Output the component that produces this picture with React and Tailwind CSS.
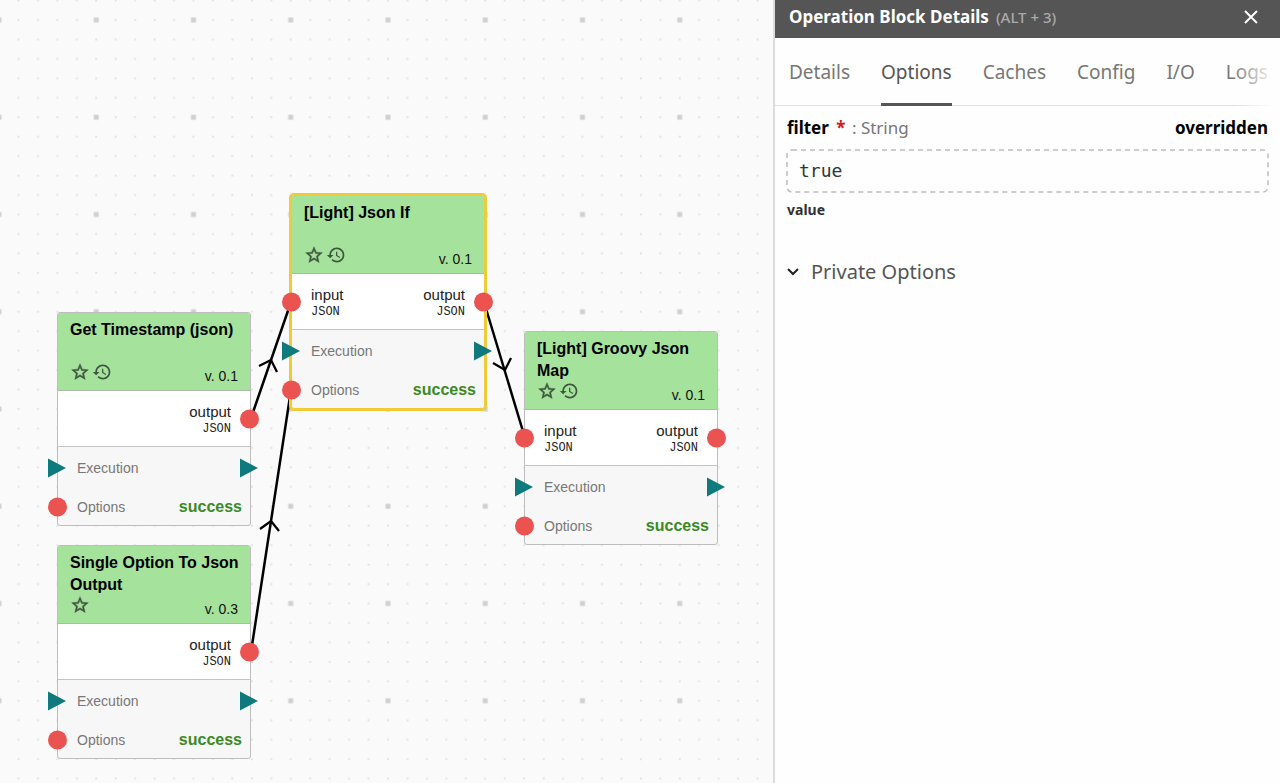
import React from "react";

const NODES = [
  { id: "timestamp", title: "Get Timestamp (json)", version: "0.1", history: true, output: true, place: "left-[57px] top-[312px]" },
  { id: "single-option", title: "Single Option To Json Output", version: "0.3", output: true, place: "left-[57px] top-[545px]" },
  { id: "json-if", title: "[Light] Json If", version: "0.1", history: true, input: true, output: true, selected: true, place: "left-[291px] top-[195px]" },
  { id: "groovy-map", title: "[Light] Groovy Json Map", version: "0.1", history: true, input: true, output: true, place: "left-[524px] top-[331px]" },
];

const TABS = ["Details", "Options", "Caches", "Config", "I/O", "Logs"];

function StarIcon() {
  return (
    <svg viewBox="0 0 24 24" className="size-5" fill="#3f5540" stroke="#3f5540" strokeWidth="0.5" aria-hidden="true">
      <path d="M22 9.24l-7.19-.62L12 2 9.19 8.63 2 9.24l5.46 4.73L5.82 21 12 17.27 18.18 21l-1.63-7.03L22 9.24zM12 15.4l-3.76 2.27 1-4.28-3.32-2.88 4.38-.38L12 6.1l1.71 4.04 4.38.38-3.32 2.88 1 4.28L12 15.4z" />
    </svg>
  );
}

function HistoryIcon() {
  return (
    <svg viewBox="0 0 24 24" className="size-5" fill="#3f5540" aria-hidden="true">
      <path d="M13 3c-4.97 0-9 4.03-9 9H1l3.89 3.89.07.14L9 12H6c0-3.87 3.13-7 7-7s7 3.13 7 7-3.13 7-7 7c-1.93 0-3.68-.79-4.94-2.06l-1.42 1.42C8.27 19.99 10.51 21 13 21c4.97 0 9-4.03 9-9s-4.03-9-9-9zm-1 5v5l4.28 2.54.72-1.21-3.5-2.08V8H12z" />
    </svg>
  );
}

function Grid() {
  const steps = [0, 1, 2, 3, 4];
  return (
    <svg className="absolute inset-0 h-full w-full" aria-hidden="true">
      <defs>
        <pattern id="grid" width="97.25" height="97.25" x="-11" y="10" patternUnits="userSpaceOnUse">
          {steps.map((r) =>
            steps.map((c) => (
              <rect key={`${r}-${c}`} x={9 + c * 19.45} y={9 + r * 19.45} width="2" height="2" fill="#e2e2e2" />
            ))
          )}
          <rect x="7.5" y="7.5" width="5" height="5" fill="#d0d0d0" />
        </pattern>
      </defs>
      <rect width="100%" height="100%" fill="url(#grid)" />
    </svg>
  );
}

function Wires() {
  return (
    <svg className="absolute inset-0 h-full w-full" fill="none" stroke="#000" strokeWidth="2.5" aria-hidden="true">
      <path d="M251 418L291 302M251 652L291 390M484 302L525 438" />
      <path d="M259 366L271 360L277 372M260 529L271 521L279 531M493 363L505 370L511 358" strokeWidth="2.3" />
    </svg>
  );
}

function Dot({ side, label }) {
  return (
    <button
      type="button"
      aria-label={label}
      className={`absolute top-1/2 size-[19px] -translate-y-1/2 rounded-full bg-[#ea5350] ${side === "left" ? "-left-[10px]" : "-right-[9px]"}`}
    />
  );
}

function Arrow({ side }) {
  return (
    <svg viewBox="0 0 18 20" aria-hidden="true" className={`absolute top-1/2 h-5 w-[18px] -translate-y-1/2 ${side === "left" ? "-left-[10px]" : "-right-2"}`}>
      <path d="M0 0.5L18 10L0 19.5Z" fill="#0e7a7d" />
    </svg>
  );
}

function Port({ name, align }) {
  return (
    <div className={`flex flex-col ${align}`}>
      <span className="text-[15px] leading-[18px] text-[#222]">{name}</span>
      <span className="font-['Liberation_Mono',monospace] text-xs leading-4 text-[#222]">JSON</span>
    </div>
  );
}

function Node({ node }) {
  return (
    <article
      className={`absolute w-[194px] rounded-[3px] border border-[#bdbdbd] bg-[#f7f7f7] ${node.place} ${node.selected ? "ring-2 ring-[#f0cb35] border-[#f0cb35]" : ""}`}
    >
      <header className="flex h-[78px] flex-col justify-between rounded-t-[2px] border-b border-[#a9bda6] bg-[#a5e29b] pt-[6px] pr-2 pb-1 pl-3">
        <h2 className="text-base leading-[22px] font-bold text-black">{node.title}</h2>
        <div className="-mt-2 flex items-end justify-between pr-1">
          <div className="flex gap-[2px] pb-1">
            <StarIcon />
            {node.history && <HistoryIcon />}
          </div>
          <span className="text-sm leading-5 text-[#111]">v. {node.version}</span>
        </div>
      </header>
      <div className="relative flex h-14 items-center justify-between border-b border-[#c4c4c4] bg-white px-[19px] pt-[2px]">
        {node.input && <Dot side="left" label="input port" />}
        {node.input ? <Port name="input" align="items-start" /> : <span />}
        {node.output && <Port name="output" align="items-end" />}
        {node.output && <Dot side="right" label="output port" />}
      </div>
      <div className="flex flex-col text-sm text-[#777]">
        <div className="relative flex h-[42px] items-center px-[19px]">
          <Arrow side="left" />
          Execution
          <Arrow side="right" />
        </div>
        <div className="relative flex h-9 items-center justify-between pr-2 pl-[19px]">
          <Dot side="left" label="options port" />
          Options
          <span className="text-base font-bold text-[#3b8a26]">success</span>
        </div>
      </div>
    </article>
  );
}

export default function App() {
  return (
    <div className="flex h-screen overflow-hidden bg-[#fafafa]">
      <main className="relative min-w-0 flex-1 overflow-hidden font-['Liberation_Sans',Arial,sans-serif]">
        <Grid />
        <Wires />
        {NODES.map((n) => (
          <Node key={n.id} node={n} />
        ))}
      </main>
      <aside className="z-10 flex w-[507px] flex-col border-l-2 border-[#dcdcdc] bg-[#fefefe] font-['Noto_Sans',sans-serif]">
        <header className="flex h-[38px] shrink-0 items-center bg-[#555] pr-[22px] pb-1 pl-[14px] text-white">
          <h1 className="text-[17px] leading-6 font-bold">Operation Block Details</h1>
          <span className="ml-[7px] flex-1 text-[15px] leading-6 font-medium text-[#aaa]">(ALT + 3)</span>
          <button type="button" aria-label="Close">
            <svg viewBox="0 0 14 14" className="size-[14px]" fill="none" stroke="currentColor" strokeWidth="2" aria-hidden="true">
              <path d="M1 1L13 13M13 1L1 13" />
            </svg>
          </button>
        </header>
        <nav className="relative flex h-[68px] shrink-0 gap-[31px] border-b border-[#dedede] px-[14px] text-[19px] text-[#777]">
          {TABS.map((t) => (
            <button key={t} type="button" className={`-mb-px border-b-[3px] pt-1 ${t === "Options" ? "border-[#555] text-[#555]" : "border-transparent"}`}>
              {t}
            </button>
          ))}
          <div className="pointer-events-none absolute top-0 right-0 -bottom-px w-12 bg-linear-to-r from-transparent to-[#fefefe] to-90%" />
        </nav>
        <section className="flex flex-col px-3 pt-2">
          <div className="flex items-center justify-between text-[17px] leading-7">
            <label htmlFor="filter" className="font-bold text-black">
              filter <span className="ml-[3px] text-[#d01c1c]">*</span> <span className="ml-[2px] font-normal text-[#777]">: String</span>
            </label>
            <span className="font-bold text-black">overridden</span>
          </div>
          <div className="relative mt-2 h-[42px]">
            <svg className="pointer-events-none absolute inset-0 h-full w-full overflow-visible" fill="none" aria-hidden="true">
              <rect width="100%" height="100%" rx="5" stroke="#bdbdbd" strokeWidth="1.5" strokeDasharray="5 4" />
            </svg>
            <input id="filter" defaultValue="true" className="h-full w-full bg-transparent px-3 pb-[2px] font-['DejaVu_Sans_Mono',monospace] text-lg text-[#333] outline-none" />
          </div>
          <p className="mt-2 text-sm leading-5 font-bold text-[#333]">value</p>
          <button type="button" className="mt-9 flex items-center gap-3 self-start text-[20px] leading-8 text-[#555]">
            <svg viewBox="0 0 12 8" className="h-2 w-3" fill="none" stroke="#222" strokeWidth="2" aria-hidden="true">
              <path d="M1 1L6 6L11 1" />
            </svg>
            Private Options
          </button>
        </section>
      </aside>
    </div>
  );
}
